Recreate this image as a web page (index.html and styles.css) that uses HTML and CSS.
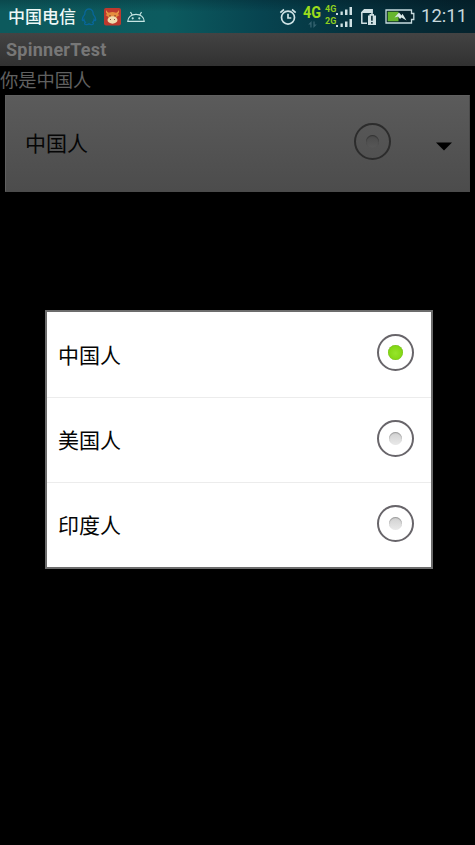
FILE: index.html
```html
<!DOCTYPE html>
<html lang="zh-CN">
<head>
<meta charset="utf-8">
<title>SpinnerTest</title>
<link rel="stylesheet" href="styles.css">
</head>
<body>
<div class="screen">
  <header class="status">
    <span class="carrier">中国电信</span>
    <svg class="penguin" width="16" height="18" viewBox="0 0 16 18" fill="none" stroke="#08669a" stroke-width="1.3"><path d="M8 1C5 1 3.7 3.3 3.8 6.3C2.2 8.2.9 10.6 1.4 12.3C1.7 12.9 2.4 12.3 2.9 11.6C3.1 12.8 3.7 13.7 4.4 14.4C3.3 15.1 3.2 16.5 5 16.6C6.3 16.7 7.4 16.4 8 15.8C8.6 16.4 9.7 16.7 11 16.6C12.8 16.5 12.7 15.1 11.6 14.4C12.3 13.7 12.9 12.8 13.1 11.6C13.6 12.3 14.3 12.9 14.6 12.3C15.1 10.6 13.8 8.2 12.2 6.3C12.3 3.3 11 1 8 1Z"/></svg>
    <svg class="bull" width="17" height="18" viewBox="0 0 17 18"><rect width="17" height="17.5" rx="2" fill="#bd392e"/><path d="M2.300 2C1.300 4.500 2.500 6.500 5 6.300L6.500 4.800C4.500 5 3 4.100 2.300 2ZM14.700 2C15.700 4.500 14.500 6.500 12 6.300L10.500 4.800C12.500 5 14 4.100 14.700 2Z" fill="#e99a45"/><path d="M5 5Q8.500 3 12 5L15.500 7L12.500 9L12 11H5L4.500 9L1.500 7Z" fill="#e58d3e"/><ellipse cx="8.500" cy="12" rx="5" ry="3.700" fill="#f0dcae"/><path d="M6 7v1.500M11 7v1.500M6.200 11.500h.8M10 11.500h.8" stroke="#6e302a" fill="none"/></svg>
    <svg class="robot" width="18" height="12" viewBox="0 0 18 12" fill="none" stroke="#c5e5e3" stroke-width="1.200"><path d="M.8 10.400C1 6 4.500 3.300 9 3.300S17 6 17.200 10.400ZM5 3.700L3.500 1M13 3.700L14.500 1"/><circle cx="5.700" cy="7.300" r=".5"/><circle cx="12.300" cy="7.300" r=".5"/></svg>
    <span class="spacer"></span>
    <svg class="alarm" width="18" height="18" viewBox="0 0 18 18" fill="none" stroke="#cfe3e5" stroke-width="1.700"><circle cx="9" cy="9.600" r="6.500"/><path d="M9 5.700V10H12.300M1.300 4.600L5 1.500M16.700 4.600L13 1.500"/></svg>
    <span class="network"><span class="net-main">4G</span><svg width="9" height="7" viewBox="0 0 9 7" fill="#356370"><path d="M3.600 0V6.500H2.300V3.500H.2ZM5.400 7V.5H6.700V3.500H8.800Z"/></svg></span>
    <span class="signals">
      <span class="sim"><span>4G</span><svg width="17" height="9" viewBox="0 0 17 9" fill="#d0e1e4"><path d="M0 7h2v2H0ZM4.500 5.500h2.300V9H4.500ZM9 3.500h2.500V9H9ZM13.500 1H16v8h-2.500Z"/></svg></span>
      <span class="sim"><span>2G</span><svg width="17" height="9" viewBox="0 0 17 9" fill="#d0e1e4"><path d="M0 7h2v2H0ZM4.500 5.500h2.300V9H4.500ZM9 3.500h2.500V9H9ZM13.500 1H16v8h-2.500Z"/></svg></span>
    </span>
    <svg class="card" width="17" height="18" viewBox="0 0 17 18"><path d="M1.800 15.300V4.500L4.500 1.700H12V6M1.200 15.300H7" fill="none" stroke="#cfdfe2" stroke-width="1.500"/><path d="M1 5L4.500 1h8.200v4H1Z" fill="#cfdfe2"/><path d="M8 7.500H9.500V6H14V7.500H16V17H8Z" fill="#cfdfe2"/><path d="M11.900 7.800v5M11.900 14v1.700" stroke="#0b2e38" stroke-width="1.600"/></svg>
    <svg class="battery" width="30" height="15" viewBox="0 0 30 15"><path d="M1 1H26.500V4.500H28.800V10.500H26.500V14H1Z" fill="#06242d" stroke="#c8dcdf" stroke-width="1.300"/><path d="M2.700 2.700H13.500V12.300H2.700Z" fill="#67b62e"/><path d="M9.500 8.500L14 3.500L16.500 6.500L17.500 4.800L21.500 11.500L16.500 8.500L15 10L13 7.500Z" fill="#dbe9e6"/></svg>
    <span class="clock">12:11</span>
  </header>
  <div class="title">SpinnerTest</div>
  <main class="content">
    <div class="label">你是中国人</div>
    <div class="spinner">
      <span class="choice">中国人</span>
      <span class="radio dim"><i></i></span>
      <svg class="arrow" width="16" height="9" viewBox="0 0 16 9"><path d="M0 .5H16L8 8.500Z"/></svg>
    </div>
  </main>
  <ul class="dialog">
    <li><span>中国人</span><span class="radio on"><i></i></span></li>
    <li><span>美国人</span><span class="radio"><i></i></span></li>
    <li><span>印度人</span><span class="radio"><i></i></span></li>
  </ul>
</div>
</body>
</html>
```
FILE: styles.css
```css
* { box-sizing: border-box; }
body { margin: 0; background: #000; font-family: Roboto, "Noto Sans CJK SC", sans-serif; }
svg { display: block; flex: none; }
.screen { position: relative; width: 475px; height: 845px; overflow: hidden; background: #000; }

.status {
  display: flex; align-items: center; height: 33px; padding: 0 8px 0 8px;
  background: linear-gradient(rgba(0, 12, 22, .22), rgba(0, 12, 22, 0) 35%), linear-gradient(90deg, #0d5a5d, #0c5b5f 35%, #074450 55%, #05313d 75%, #05232d);
}
.carrier { width: 68px; margin-top: 1px; font-size: 17px; line-height: 32px; font-weight: 500; color: #edf8f7; white-space: nowrap; }
.penguin { margin-left: 5px; }
.bull { margin-left: 7px; }
.robot { margin-left: 6px; }
.spacer { flex: 1; }
.alarm { margin-right: 6px; }
.network { display: flex; flex-direction: column; align-items: center; width: 19px; height: 25px; margin-right: 3px; }
.net-main { font-size: 16px; line-height: 17px; font-weight: 700; color: #9bdc1c; transform: scaleX(.9); }
.signals { display: flex; flex-direction: column; gap: 2px; width: 28px; margin: -1px 7px 0 0; }
.sim { display: flex; align-items: flex-end; height: 10px; font-size: 9px; line-height: 10px; font-weight: 700; color: #8fce20; }
.sim span { width: 11px; align-self: flex-start; margin-top: -1px; }
.card { margin-right: 8px; }
.battery { margin-right: 6px; }
.clock { width: 46px; font-size: 18.500px; line-height: 35px; color: #c8d9dd; white-space: nowrap; }

.title {
  height: 33px; padding-left: 6px; line-height: 34px; font-size: 18px; font-weight: 700; letter-spacing: .25px;
  color: #777; background: linear-gradient(#434343, #313131);
}
.label { height: 29px; font-size: 18.300px; line-height: 29px; color: #606060; }
.spinner {
  display: flex; align-items: center; height: 97px; margin: 0 5px; padding: 0 17px 0 19px;
  border: 1px solid #4b4b4b; border-top-color: #606060; border-left-color: #606060;
  background: linear-gradient(#5b5b5b, #4c4c4c); color: #060606;
}
.choice { flex: 1; margin-top: 1px; font-size: 21px; line-height: 30px; }
.arrow { margin: 6px 0 0 45px; }

.radio {
  display: flex; align-items: center; justify-content: center; flex: none;
  width: 37px; height: 37px; border: 2px solid #68656a; border-radius: 50%;
}
.radio i {
  width: 13px; height: 13px; border-radius: 50%;
  background: linear-gradient(#d0d0d0, #e9e9e9); box-shadow: inset 0 1px 1px #999;
}
.radio.on i { width: 15px; height: 15px; background: radial-gradient(circle at 50% 55%, #96e52b, #83d713 65%, #77ba22); box-shadow: inset 0 0 1px #619b1c; }
.radio.dim { border-color: #2c2c2c; margin-top: -4px; }
.radio.dim i { background: linear-gradient(#4a4a4a, #575757); box-shadow: inset 0 1px 1px #333; }

.dialog {
  position: absolute; left: 45px; top: 310px; width: 388px; height: 259px;
  display: grid; grid-template-rows: 85px 85px 1fr; margin: 0; padding: 0; list-style: none;
  border: 2px solid #6c6c6c; background: #fff;
}
.dialog li { display: flex; align-items: center; justify-content: space-between; padding: 0 17px 0 11px; font-size: 21px; color: #050505; }
.dialog li + li { border-top: 1px solid #ececec; }
.dialog li span:first-child { margin-top: -2px; }
.dialog .radio { margin-top: -4px; }
```
